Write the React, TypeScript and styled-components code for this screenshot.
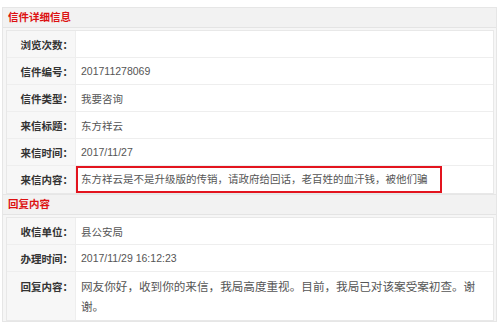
import { createGlobalStyle, styled } from "styled-components";

const GlobalStyle = createGlobalStyle`
  body {
    margin: 0;
    background: #ffffff;
    font-family: "Liberation Sans", "Noto Sans CJK SC", sans-serif;
  }
`;

const Page = styled.div`
  width: 500px;
  padding: 7px 3px 0 2px;
  box-sizing: border-box;
`;

const Section = styled.div`
  border: 1px solid #e6e6e6;
  border-top: none;
  background: #f6f6f6;
  &:first-child {
    border-top: 1px solid #e6e6e6;
  }
`;

const Header = styled.div`
  height: 19px;
  line-height: 19px;
  padding-left: 5px;
  background: #f2f2f2;
  border-bottom: 1px solid #e4e4e4;
  color: #dd1111;
  font-size: 10.5px;
  font-weight: bold;
`;

const Body = styled.div`
  padding: 2px 2px 0 3px;
`;

const Table = styled.div`
  background: #ffffff;
  border: 1px solid #e8e8e8;
`;

const Row = styled.div`
  display: flex;
  min-height: 26px;
  border-top: 1px solid #eeeeee;
  &:first-child {
    border-top: none;
  }
`;

const Label = styled.div<{ $top?: boolean }>`
  width: 69px;
  flex: none;
  box-sizing: border-box;
  padding: ${(p) => (p.$top ? "5px 2px 0 0" : "0 2px 0 0")};
  background: #f7f7f7;
  border-right: 1px solid #eeeeee;
  color: #333333;
  font-size: 10.5px;
  font-weight: bold;
  line-height: ${(p) => (p.$top ? "20px" : "normal")};
  display: flex;
  align-items: ${(p) => (p.$top ? "flex-start" : "center")};
  justify-content: flex-end;
`;

const Value = styled.div`
  flex: 1;
  display: flex;
  align-items: center;
  padding: 0 5px;
  color: #555555;
  font-size: 10.5px;
`;

const LongText = styled.div`
  flex: 1;
  padding: 5px 12px 3px 5px;
  color: #555555;
  font-size: 11.6px;
  line-height: 20px;
`;

const Highlight = styled.span`
  display: inline-block;
  margin-left: -5px;
  padding: 3px 12px 3px 3px;
  border: 2px solid #e3141e;
  line-height: 17px;
`;

type Item = { label: string; value?: string };

const letter: Item[] = [
  { label: "浏览次数：" },
  { label: "信件编号：", value: "201711278069" },
  { label: "信件类型：", value: "我要咨询" },
  { label: "来信标题：", value: "东方祥云" },
  { label: "来信时间：", value: "2017/11/27" },
];

const reply: Item[] = [
  { label: "收信单位：", value: "县公安局" },
  { label: "办理时间：", value: "2017/11/29 16:12:23" },
];

export default function App() {
  return (
    <Page>
      <GlobalStyle />
      <Section>
        <Header>信件详细信息</Header>
        <Body>
          <Table>
            {letter.map((item) => (
              <Row key={item.label}>
                <Label>{item.label}</Label>
                <Value>{item.value}</Value>
              </Row>
            ))}
            <Row>
              <Label>来信内容：</Label>
              <Value>
                <Highlight>
                  东方祥云是不是升级版的传销，请政府给回话，老百姓的血汗钱，被他们骗
                </Highlight>
              </Value>
            </Row>
          </Table>
        </Body>
      </Section>
      <Section>
        <Header>回复内容</Header>
        <Body>
          <Table>
            {reply.map((item) => (
              <Row key={item.label}>
                <Label>{item.label}</Label>
                <Value>{item.value}</Value>
              </Row>
            ))}
            <Row>
              <Label $top>回复内容：</Label>
              <LongText>
                网友你好，收到你的来信，我局高度重视。目前，我局已对该案受案初查。谢谢。
              </LongText>
            </Row>
          </Table>
        </Body>
      </Section>
    </Page>
  );
}
